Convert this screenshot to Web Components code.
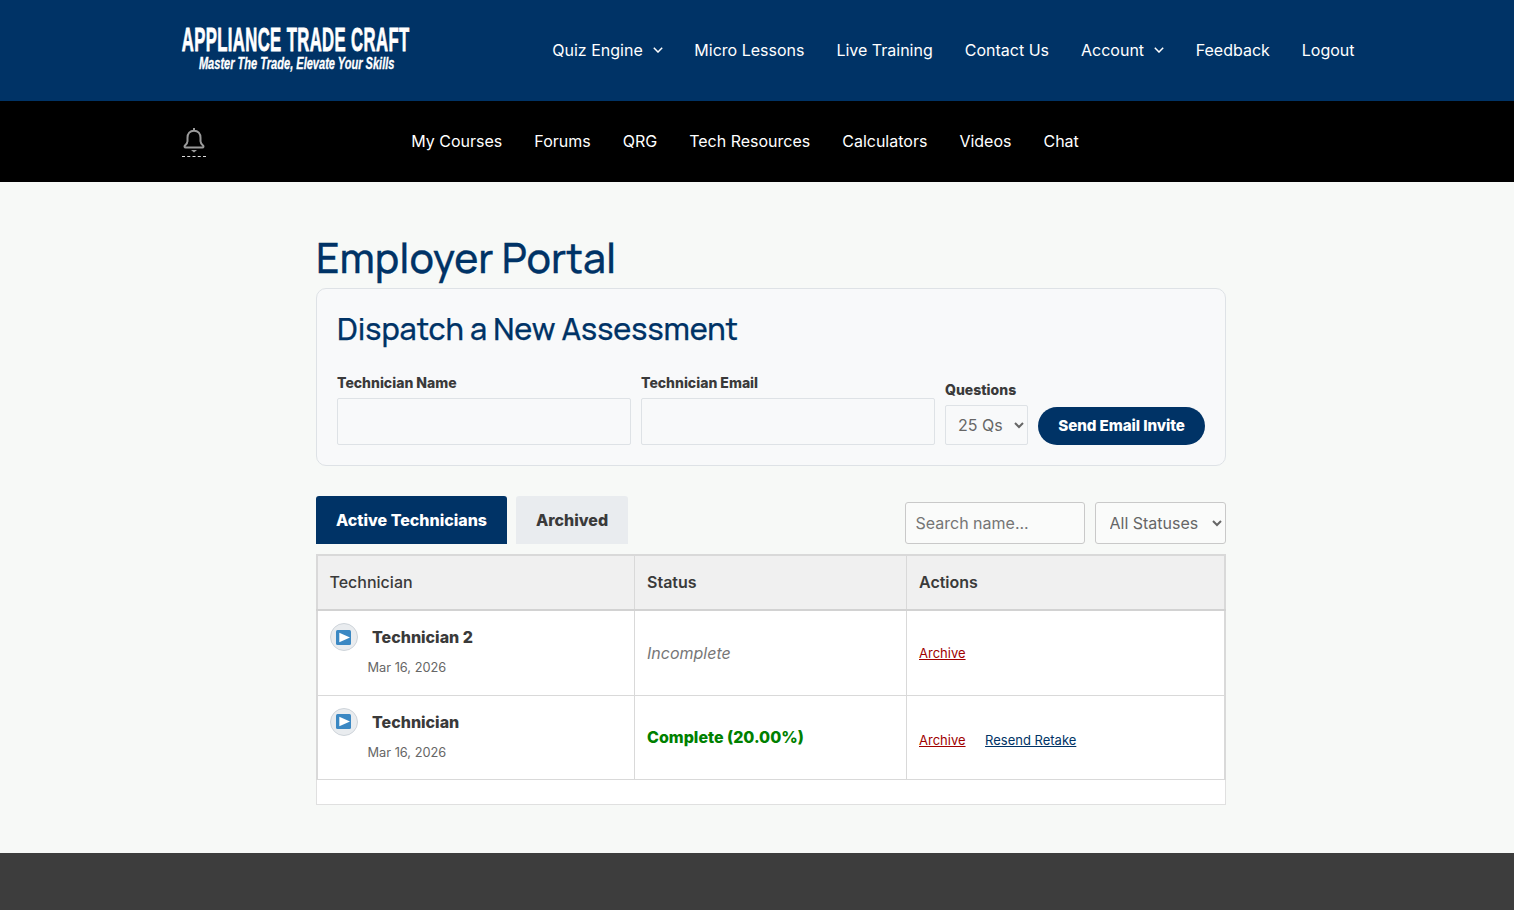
<!DOCTYPE html>
<html lang="en"><head><meta charset="utf-8"><title>Employer Portal</title>
<style>
html,body{margin:0;padding:0;background:#f7f9f7;font-family:Inter,"Liberation Sans",sans-serif;color:#333}
</style></head><body>
<site-header></site-header>
<sub-nav></sub-nav>
<portal-main></portal-main>
<site-footer></site-footer>
<script>
const chev='<svg width="10" height="6" viewBox="0 0 10 6" fill="none" stroke="#fff" stroke-width="1.5"><path d="M.8.8 5 5 9.2.8"/></svg>';
function def(name,html){customElements.define(name,class extends HTMLElement{constructor(){super();this.attachShadow({mode:'open'}).innerHTML=html;}})}
def('site-logo',`<style>
:host{display:flex;flex-direction:column;align-items:center;width:229px;color:#fff}
.a,.b{display:block;white-space:nowrap;font-family:"Liberation Sans",sans-serif;font-weight:700;transform-origin:center;flex:none}
.a{font-size:33px;line-height:29px;transform:scaleX(.505);letter-spacing:.8px;-webkit-text-stroke:.8px #fff}
.b{font-size:16px;line-height:16px;font-style:italic;transform:scaleX(.69);margin:2px 0 0 2px;-webkit-text-stroke:.3px #fff}
</style><span class="a">APPLIANCE TRADE CRAFT</span><span class="b">Master The Trade, Elevate Your Skills</span>`);
def('site-header',`<style>
:host{display:flex;height:101px;background:#003366;box-sizing:border-box;padding:0 0 0 181px;align-items:center;color:#fff}
site-logo{margin-top:-4px}
nav{display:flex;gap:32px;margin-left:142.300px;font-size:16px;font-weight:400;margin-top:-2px}
a{display:flex;align-items:center;gap:10.400px;white-space:nowrap;color:#fff;text-decoration:none}
.k{margin-right:-.8px}
</style><site-logo></site-logo><nav>
<a class="k">Quiz Engine ${chev}</a><a>Micro Lessons</a><a>Live Training</a><a>Contact Us</a><a class="k">Account ${chev}</a><a>Feedback</a><a>Logout</a></nav>`);
def('sub-nav',`<style>
:host{display:flex;height:81px;background:#000;box-sizing:border-box;padding-left:182px;align-items:center;color:#fff}
.bell{display:flex;flex-direction:column;width:24px;margin-top:0;align-items:center}
.dash{width:24px;border-top:1px dashed #ddd;margin-top:2px}
nav{display:flex;gap:32px;margin-left:205.300px;font-size:16px;margin-top:-2px}
a{white-space:nowrap}
</style><div class="bell"><svg width="22" height="27" viewBox="0 0 22 27" fill="none" stroke="#9a9a9a" stroke-width="2" stroke-linejoin="round"><path d="M11 1v2.700M11 3.700c-4 0-6.500 3-6.500 7v3.500c0 2-1.300 3.300-2.700 4.600-.6.600-.2 1.700.7 1.700h17c.9 0 1.300-1.100.7-1.700-1.400-1.300-2.700-2.600-2.700-4.600v-3.500c0-4-2.500-7-6.500-7z"/><path d="M8 23h6l-3 2.500z" fill="#9a9a9a" stroke="none"/></svg><div class="dash"></div></div>
<nav><a>My Courses</a><a>Forums</a><a>QRG</a><a>Tech Resources</a><a>Calculators</a><a>Videos</a><a>Chat</a></nav>`);
def('dispatch-card',`<style>
:host{display:block;box-sizing:border-box;height:178px;border:1px solid #dee2e6;border-radius:10px;background:#f8f9fa;padding:20px}
h2{margin:0;font:500 30.4px/40px Manrope,"Noto Sans",Inter,sans-serif;color:#003366;-webkit-text-stroke:.25px #003366}
form{display:flex;gap:10px;margin-top:25px;align-items:flex-end}
label{display:block;font-size:14px;font-weight:800;line-height:17px;color:#3a3a3a;margin-bottom:7px}
.f{width:294px}
input{display:block;box-sizing:border-box;width:100%;height:47px;background:#f8f9fa;border:1px solid #dee2e6;border-radius:2px;outline:0}
select{display:block;box-sizing:border-box;width:83px;height:40px;padding:0 8px;background:#f8f9fa;border:1px solid #dee2e6;border-radius:2px;font:16px Inter,sans-serif;color:#666}
button{height:38px;width:167px;border:0;border-radius:19px;background:#003366;color:#fff;font:800 15.200px Inter,sans-serif;padding:0 0 2px;letter-spacing:-.1px}
</style><h2>Dispatch a New Assessment</h2><form>
<div class="f"><label>Technician Name</label><input></div>
<div class="f"><label>Technician Email</label><input></div>
<div><label>Questions</label><select><option>25 Qs</option></select></div>
<button type="button">Send Email Invite</button></form>`);
def('tool-bar',`<style>
:host{display:flex;height:48px;margin-top:30px;align-items:flex-end}
.t{display:flex;height:48px;align-items:center;justify-content:center;box-sizing:border-box;font-size:16px;font-weight:800;border-radius:3px 3px 0 0}
.on{width:191px;background:#003366;color:#fff}.off{width:112px;margin-left:9px;background:#e9ecef;color:#3a3a3a}
.sp{flex:1}
input,select{box-sizing:border-box;height:42px;background:#fafbfa;border:1px solid #c9c9c9;border-radius:3px;font:16px Inter,sans-serif;color:#666;outline:0}
input{width:180px;padding:0 9.500px;margin-right:10px}input::placeholder{color:#757575;opacity:1}
select{width:131px;padding:0 9.500px}
</style><div class="t on">Active Technicians</div><div class="t off">Archived</div><div class="sp"></div>
<input placeholder="Search name..."><select><option>All Statuses</option></select>`);
def('play-ic',`<style>:host{display:inline-flex;flex:none;width:28px;height:28px;box-sizing:border-box;border:1px solid #ced4da;border-radius:50%;background:#e9ecef;align-items:center;justify-content:center}svg{margin-left:-1px}</style>
<svg width="15" height="15" viewBox="0 0 15 15"><rect width="15" height="15" rx="1.500" fill="#3b88c3"/><path d="M3.300 2.700 14 7.500 3.300 12.300z" fill="#fff"/></svg>`);
def('tech-cell',`<style>
:host{display:block;height:60px}
.n{display:flex;align-items:center;gap:14px;height:28px;font-size:16px;font-weight:800;color:#3a3a3a}
.d{font-size:12.800px;line-height:16px;color:#666;margin:9px 0 0 37.500px}
</style><div class="n"><play-ic></play-ic><slot></slot></div><div class="d"><slot name="d"></slot></div>`);
def('tech-table',`<style>
:host{display:block;margin-top:10px;height:251px;box-sizing:border-box;background:#fff;border:1px solid #e0e0e0;border-top:0}
table{width:910px;margin:0 0 0 -1px;border-collapse:collapse;table-layout:fixed;font-size:16px;border:2px solid #d9d9d9;border-bottom:0}
th,td{border:1px solid #d9d9d9;padding:0 12.500px;text-align:left;box-sizing:border-box}
td:first-child{padding-left:12px}
th{height:55px;background:#f0f0f0;font-weight:600;color:#3a3a3a;border-bottom:2px solid #d2d2d2;padding-bottom:2px}
th:first-child{font-weight:550;padding-left:11.500px}
td{background:#fff;height:85px}
tr.last td{height:84px}
td.top{vertical-align:top;padding-top:12px}
.i{font-style:italic;color:#777}.c{color:#008000;font-weight:800;padding-bottom:1px}
a{font-size:13px;text-decoration:underline;color:#a00000}a.r{color:#003366;margin-left:15px}
.ar{padding-top:3px}
</style><table><colgroup><col style="width:317px"><col style="width:272px"><col></colgroup>
<tr><th>Technician</th><th>Status</th><th>Actions</th></tr>
<tr><td class="top"><tech-cell>Technician 2<span slot="d">Mar 16, 2026</span></tech-cell></td><td class="i">Incomplete</td><td style="padding-bottom:1px"><a>Archive</a></td></tr>
<tr class="last"><td class="top"><tech-cell>Technician<span slot="d">Mar 16, 2026</span></tech-cell></td><td class="c">Complete (20.00%)</td><td class="ar"><a>Archive</a> <a class="r">Resend Retake</a></td></tr>
</table>`);
def('portal-main',`<style>
:host{display:block;width:910px;margin:0 0 0 316px;padding:46px 0 48px}
h1{margin:0;height:60px;font:500 40.800px/59px Manrope,"Noto Sans",Inter,sans-serif;color:#003366;-webkit-text-stroke:.3px #003366}
</style><h1>Employer Portal</h1><dispatch-card></dispatch-card><tool-bar></tool-bar><tech-table></tech-table>`);
def('site-footer',`<style>:host{display:block;height:57px;background:#3d3d3d}</style>`);
</script></body></html>
